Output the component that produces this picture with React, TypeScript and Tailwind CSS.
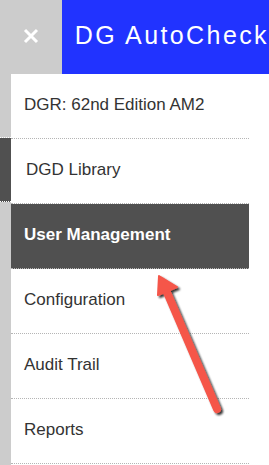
import React from 'react';

const items = [
    { label: 'DGR: 62nd Edition AM2', active: false, indent: 'pl-[13px]' },
    { label: 'DGD Library', active: false, indent: 'pl-[15px]' },
    { label: 'User Management', active: true, indent: 'pl-[13px]' },
    { label: 'Configuration', active: false, indent: 'pl-[13px]' },
    { label: 'Audit Trail', active: false, indent: 'pl-[13px]' },
    { label: 'Reports', active: false, indent: 'pl-[13px]' },
];

const App: React.FC = () => {
    return (
        <div className="relative w-[269px] h-[465px] overflow-hidden bg-white font-['Liberation_Sans',Arial,sans-serif]">
            {/* top bar */}
            <div className="flex h-[74px]">
                <div className="w-[62px] bg-[#cccccc] flex items-center justify-center">
                    <svg width="16" height="16" viewBox="0 0 16 16" className="-mt-[2px]">
                        <path d="M2 2 L14 14 M14 2 L2 14" stroke="#fff" strokeWidth="3" />
                    </svg>
                </div>
                <div className="flex-1 bg-[#2133ff] flex items-center pl-[13px]">
                    <span className="text-white text-[25px] tracking-[2.4px] whitespace-nowrap -mt-[2px]">DG AutoCheck</span>
                </div>
            </div>

            <div className="flex">
                {/* page strip behind the menu */}
                <div className="w-[11px] flex flex-col">
                    <div className="h-[64px] bg-[#cccccc] border-b border-dotted border-white" />
                    <div className="h-[64px] bg-[#505050] border-b border-dotted border-white" />
                    <div className="h-[265px] bg-[#cccccc] border-b border-dotted border-white" />
                    <div className="h-[10px] bg-[#cccccc]" />
                </div>

                {/* menu */}
                <ul className="w-[238px] flex flex-col">
                    {items.map((item) => (
                        <li
                            key={item.label}
                            className={`h-[65px] flex items-center border-b border-dotted border-[#b5b5b5] ${item.indent} ${
                                item.active ? 'bg-[#505050] text-white font-bold' : 'text-[#333333]'
                            } text-[17px]`}
                        >
                            <span className="-mt-[3px]">{item.label}</span>
                        </li>
                    ))}
                </ul>
            </div>

            {/* annotation arrow */}
            <svg className="absolute left-0 top-0 pointer-events-none" width="269" height="465" viewBox="0 0 269 465">
                <defs>
                    <filter id="sh" x="-50%" y="-50%" width="200%" height="200%">
                        <feGaussianBlur in="SourceAlpha" stdDeviation="1.2" />
                        <feOffset dx="2" dy="1.5" result="b" />
                        <feComponentTransfer>
                            <feFuncA type="linear" slope="0.8" />
                        </feComponentTransfer>
                        <feMerge>
                            <feMergeNode />
                            <feMergeNode in="SourceGraphic" />
                        </feMerge>
                    </filter>
                </defs>
                <g filter="url(#sh)">
                    <line x1="217" y1="409" x2="166" y2="290" stroke="#f5564a" strokeWidth="8" strokeLinecap="round" />
                    <path d="M159 276 L177 287 L158 295 Z" fill="#f5564a" stroke="#f5564a" strokeWidth="2" strokeLinejoin="round" />
                </g>
            </svg>
        </div>
    );
};

export default App;
